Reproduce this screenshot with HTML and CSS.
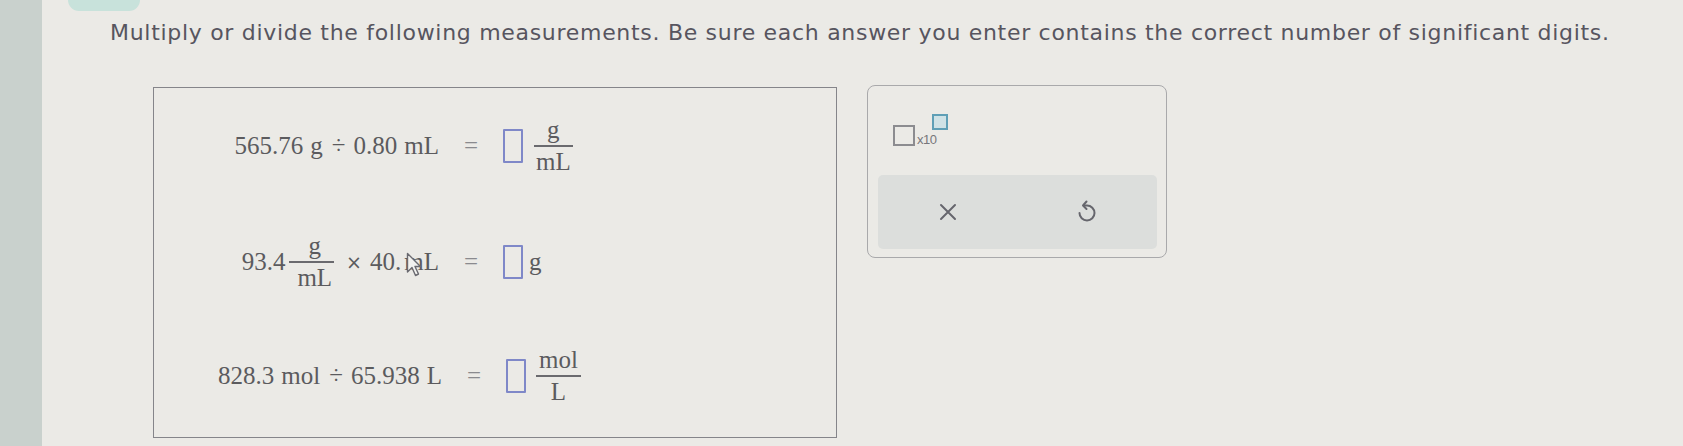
FILE: index.html
```html
<!DOCTYPE html>
<html lang="en">
<head>
<meta charset="UTF-8">
<meta name="viewport" content="width=device-width, initial-scale=1.0">
<title>Significant digits</title>
<link rel="stylesheet" href="styles.css">
</head>
<body>

  <div class="page">
    <aside class="rail"></aside>

    <main class="sheet">
      <div class="tab"></div>
      <p class="prompt">Multiply or divide the following measurements. Be sure each answer you enter contains the correct number of significant digits.</p>

      <div class="work">
        <section class="problems">

          <div class="eq">
            <div class="lhs">
              <span>565.76</span><span class="unit">g</span><span class="op">÷</span><span>0.80</span><span class="unit">mL</span>
            </div>
            <div class="equals">=</div>
            <div class="rhs">
              <span class="blank"></span>
              <span class="frac"><span class="num">g</span><span class="den">mL</span></span>
            </div>
          </div>

          <div class="eq">
            <div class="lhs">
              <span>93.4</span>
              <span class="frac frac--wide"><span class="num">g</span><span class="den">mL</span></span>
              <span class="op op--times">×</span><span>40.</span><span class="unit unit--tight">mL</span>
            </div>
            <div class="equals">=</div>
            <div class="rhs">
              <span class="blank"></span>
              <span class="unit unit--after">g</span>
            </div>
            <svg class="pointer" width="16" height="26" viewBox="0 0 16 26">
              <path d="M1.5 1.5 L1.5 20 L6 15.5 L9.5 23.5 L12.5 22 L9 14.5 L14.5 14.5 Z" fill="#f2f2ef" stroke="#6a6a70" stroke-width="1.4" stroke-linejoin="round"/>
            </svg>
          </div>

          <div class="eq eq--shift">
            <div class="lhs">
              <span>828.3</span><span class="unit">mol</span><span class="op">÷</span><span>65.938</span><span class="unit">L</span>
            </div>
            <div class="equals">=</div>
            <div class="rhs">
              <span class="blank"></span>
              <span class="frac frac--mol"><span class="num">mol</span><span class="den">L</span></span>
            </div>
          </div>

        </section>

        <section class="tools">
          <div class="sci">
            <span class="sci-base"></span>
            <span class="sci-text">x10</span>
            <span class="sci-exp"></span>
          </div>

          <div class="keypad">
            <button class="key" aria-label="Clear">
              <svg width="18" height="18" viewBox="0 0 18 18">
                <path d="M2 2 L16 16 M16 2 L2 16" stroke="#66666d" stroke-width="2" stroke-linecap="round"/>
              </svg>
            </button>
            <button class="key" aria-label="Undo">
              <svg width="22" height="26" viewBox="0 0 22 26">
                <path d="M8.5 6.5 H11 A7.5 7.5 0 1 1 3.5 14" fill="none" stroke="#66666d" stroke-width="2" stroke-linecap="round"/>
                <path d="M10.5 2.5 L7 6.5 L10.5 10" fill="none" stroke="#66666d" stroke-width="2" stroke-linecap="round" stroke-linejoin="round"/>
              </svg>
            </button>
          </div>
        </section>
      </div>
    </main>
  </div>

</body>
</html>
```

FILE: styles.css
```css
body {
  margin: 0;
  padding: 0;
  background-color: #ebeae6;
  font-family: "DejaVu Sans", Verdana, sans-serif;
}

.page {
  display: flex;
  height: 446px;
  overflow: hidden;
}

.rail {
  width: 42px;
  flex-shrink: 0;
  background-color: #c9d1cd;
}

.sheet {
  flex: 1;
  padding-left: 68px;
}

.tab {
  width: 72px;
  height: 11px;
  margin-left: -42px;
  background-color: #c8e2db;
  border-radius: 0 0 14px 14px;
}

.prompt {
  margin: 9px 0 0 0;
  font-size: 22px;
  line-height: 26px;
  letter-spacing: 0.7px;
  color: #57555f;
  white-space: nowrap;
}

.work {
  display: flex;
  align-items: flex-start;
  gap: 30px;
  margin-top: 39px;
  padding-left: 43px;
}

/* equations box */
.problems {
  width: 684px;
  height: 351px;
  margin-top: 2px;
  border: 1px solid #85858a;
  box-sizing: border-box;
  padding-top: 28px;
  display: flex;
  flex-direction: column;
  gap: 56px;
  font-family: "Liberation Serif", "Times New Roman", serif;
  font-size: 25px;
  color: #5b5b5e;
}

.eq {
  position: relative;
  display: flex;
  align-items: center;
  height: 60px;
}

.eq--shift {
  padding-left: 3px;
  margin-top: -2px;
}

.lhs {
  width: 285px;
  display: flex;
  align-items: center;
  justify-content: flex-end;
}

.unit {
  margin-left: 7px;
}

.unit--tight {
  margin-left: 3px;
}

.unit--after {
  margin-left: 6px;
}

.op {
  margin: 0 8px 0 9px;
}

.op--times {
  margin: 0 8px 0 12px;
  font-family: "DejaVu Sans", sans-serif;
  font-size: 19px;
}

.equals {
  width: 64px;
  text-align: center;
  color: #8a8a8e;
}

.rhs {
  display: flex;
  align-items: center;
}

.blank {
  width: 16px;
  height: 30px;
  border: 2px solid #7f88c8;
  border-radius: 1px;
}

.frac {
  display: inline-flex;
  flex-direction: column;
  align-items: stretch;
  text-align: center;
  margin-left: 11px;
}

.frac .num {
  line-height: 24px;
  padding-bottom: 3px;
}

.frac .den {
  line-height: 26px;
  padding: 2px 2px 0 2px;
  border-top: 2px solid #6a6a6e;
}

.frac--wide {
  margin: 0 0 0 4px;
}

.frac--wide .num {
  padding-left: 6px;
}

.frac--wide .den {
  padding: 2px 2px 0 8px;
}

.frac--mol {
  margin-left: 10px;
}

.frac--mol .num {
  padding: 0 3px 3px 3px;
}

.pointer {
  position: absolute;
  left: 252px;
  top: 20px;
}

/* notation / keypad panel */
.tools {
  width: 300px;
  height: 173px;
  box-sizing: border-box;
  border: 1.5px solid #a9a9ab;
  border-radius: 8px;
  padding: 0 9px 8px 10px;
  display: flex;
  flex-direction: column;
}

.sci {
  position: relative;
  display: flex;
  align-items: flex-end;
  height: 32px;
  margin: 28px 0 0 15px;
}

.sci-base {
  width: 18px;
  height: 17px;
  border: 2px solid #8c8c90;
}

.sci-text {
  margin-left: 2px;
  font-family: "Liberation Sans", Arial, sans-serif;
  font-size: 13px;
  line-height: 13px;
  color: #77777b;
  letter-spacing: -0.5px;
}

.sci-exp {
  position: absolute;
  left: 39px;
  top: 0;
  width: 12px;
  height: 12px;
  border: 2px solid #5f9fb6;
  background-color: #cfe2e6;
}

.keypad {
  margin-top: auto;
  height: 74px;
  display: flex;
  background-color: #dcdedc;
  border-radius: 5px;
}

.keypad .key {
  flex: 1;
  display: flex;
  align-items: center;
  justify-content: center;
  background: none;
  border: none;
  padding: 0;
  cursor: pointer;
}
```
